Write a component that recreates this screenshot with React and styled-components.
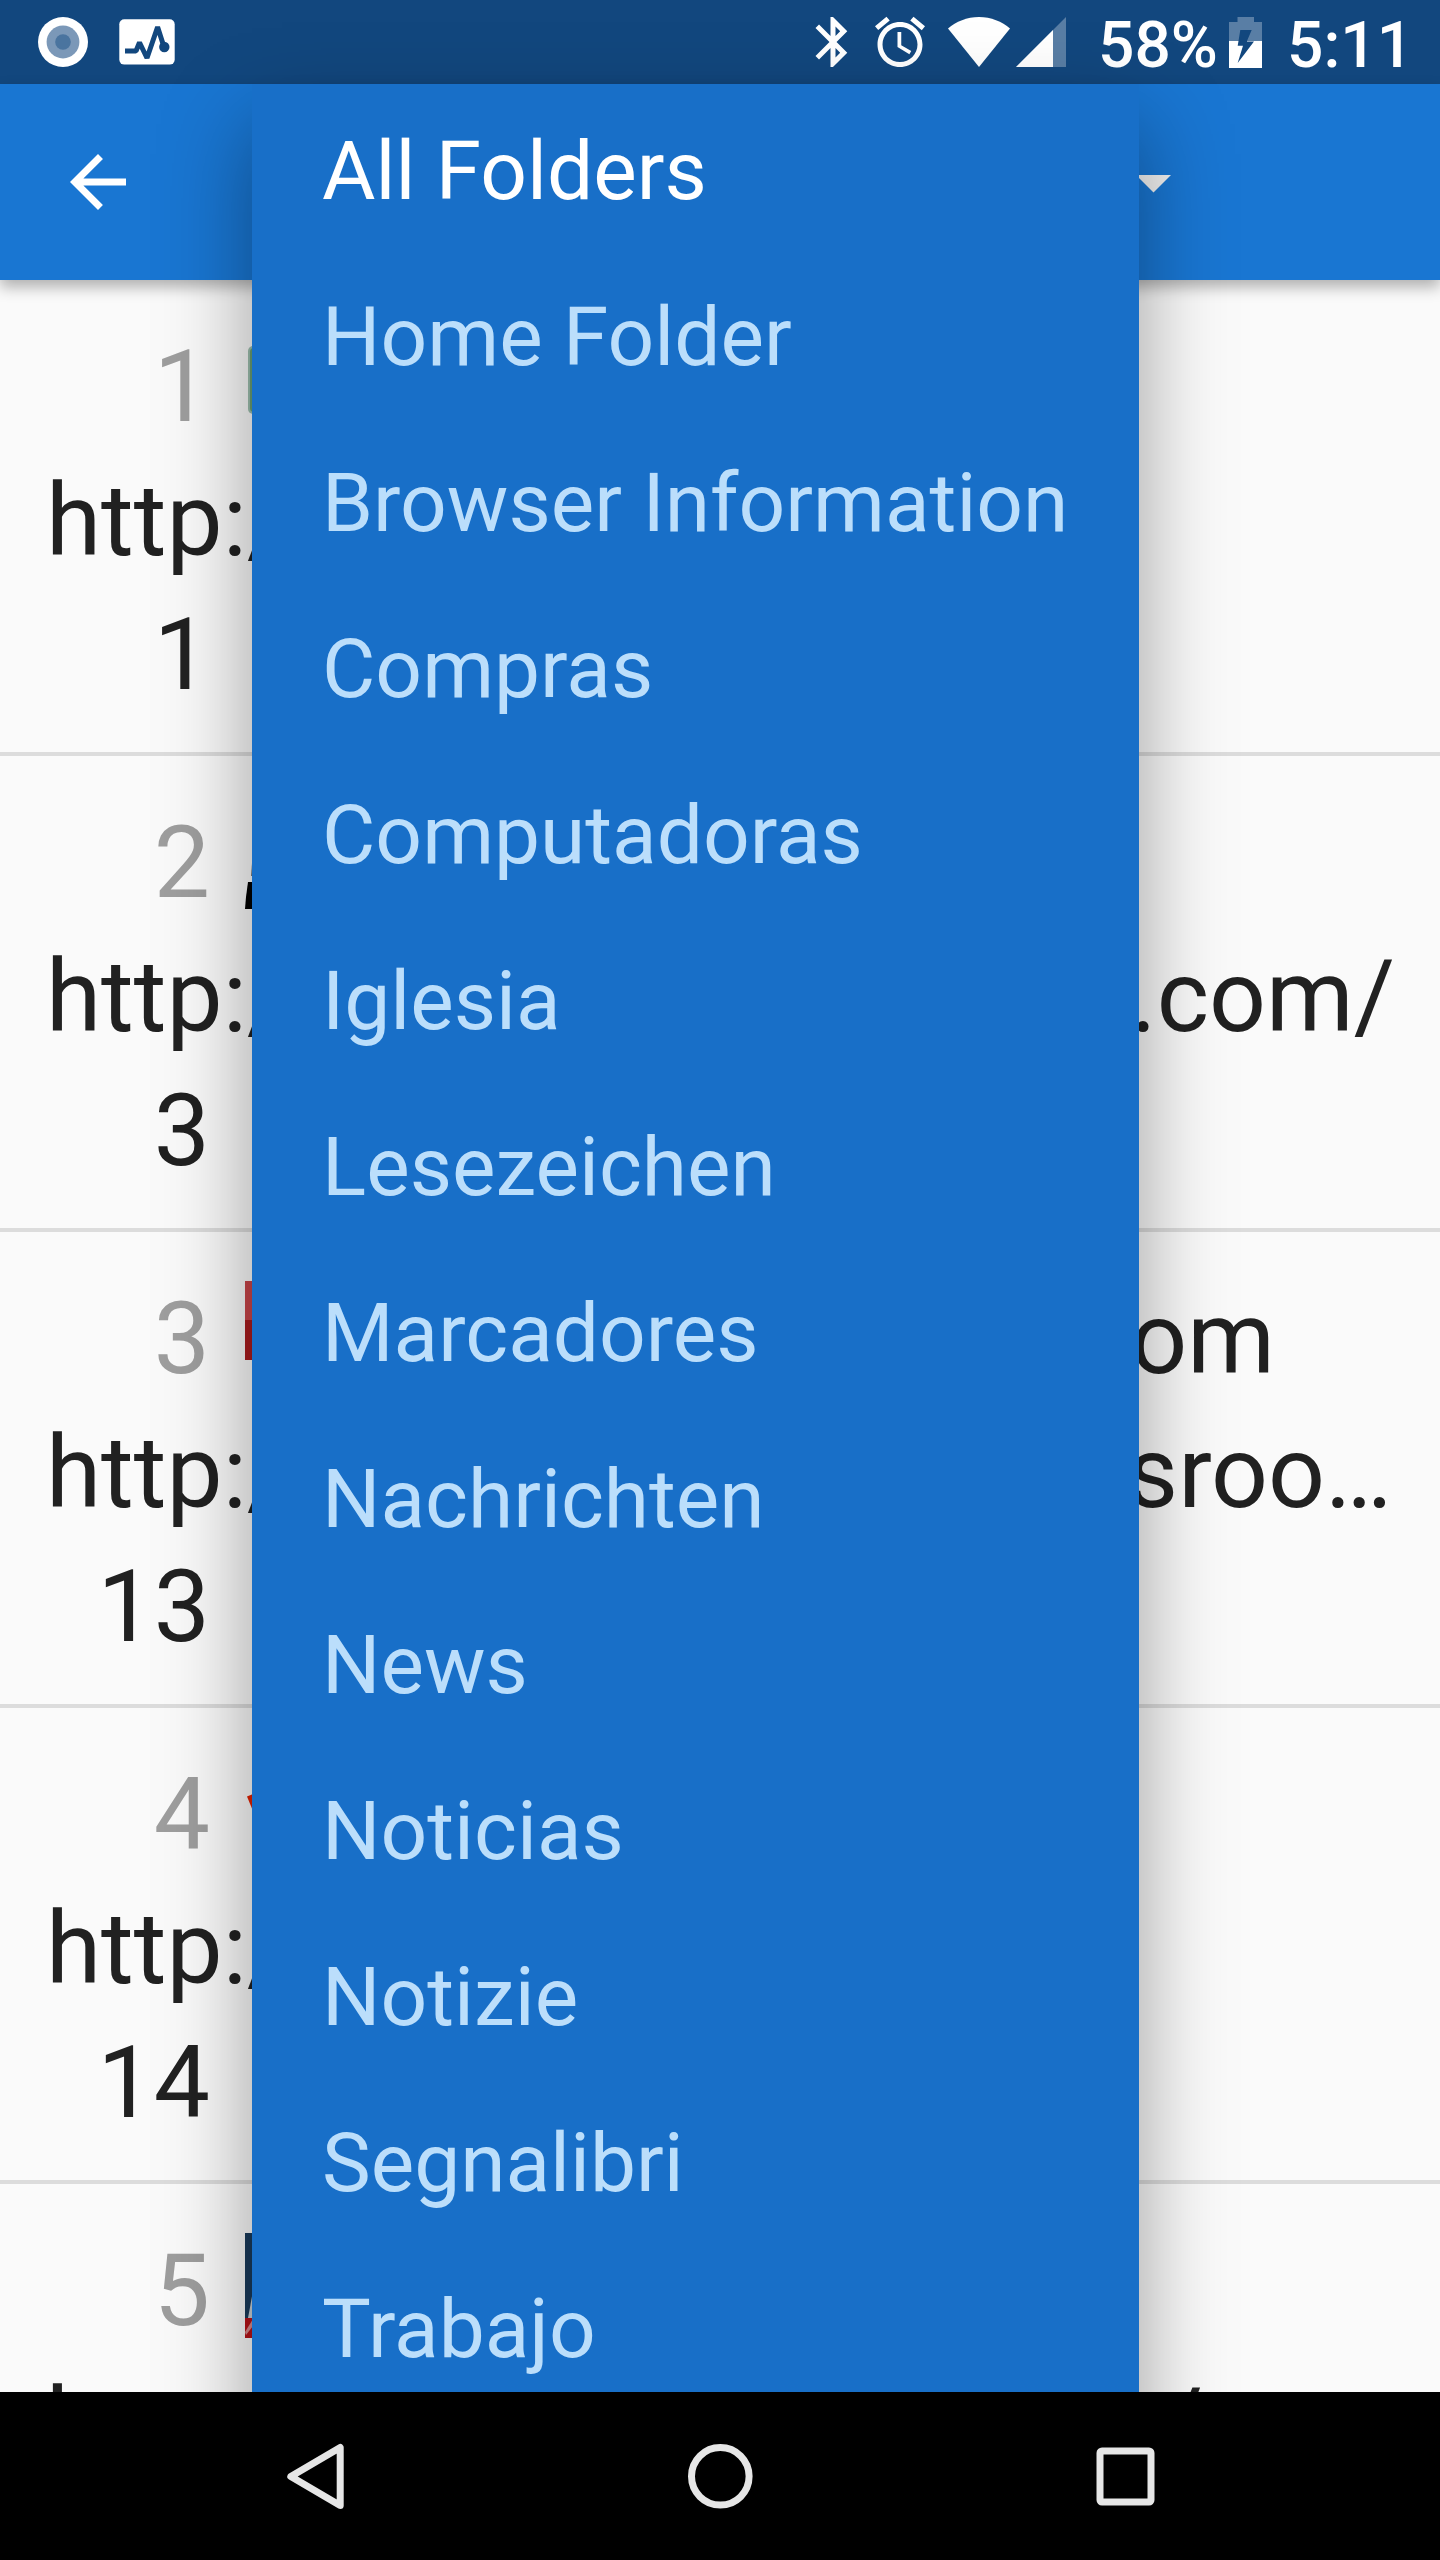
import React from "react";
import styled, { createGlobalStyle } from "styled-components";

const folders = [
  "All Folders",
  "Home Folder",
  "Browser Information",
  "Compras",
  "Computadoras",
  "Iglesia",
  "Lesezeichen",
  "Marcadores",
  "Nachrichten",
  "News",
  "Noticias",
  "Notizie",
  "Segnalibri",
  "Trabajo",
];

// the middle of every title and url sits under the open folder menu
const bookmarks = [
  { order: 1, id: 1, icon: "green" },
  { order: 2, id: 3, icon: "black", urlEnd: ".com/", urlGap: -1 },
  { order: 3, id: 13, icon: "flag", titleEnd: "om", titleGap: 119, urlEnd: "sroo…", urlGap: 2 },
  { order: 4, id: 14, icon: "check" },
  { order: 5, id: 15, icon: "navy", urlEnd: "/", urlGap: 191 },
];

function Favicon({ name }) {
  return (
    <FaviconSvg viewBox="0 0 105 105">
      {name === "green" && (
        <>
          <rect x="3" y="17" width="99" height="68" rx="5" fill="#9dbfae" />
          <rect x="5" y="19" width="95" height="64" rx="4" fill="#6a9f72" />
        </>
      )}
      {name === "black" && (
        <>
          <path d="M6 71L7 58H97V71z" fill="#777" />
          <path d="M0 104L1 92L3 77H102L105 104z" fill="#000" />
        </>
      )}
      {name === "flag" && (
        <>
          <rect width="105" height="39" fill="#c84549" />
          <rect y="39" width="105" height="40" fill="#a81b1e" />
        </>
      )}
      {name === "check" && <path d="M2 39.500L8 37L50 90L38 96L8 54z" fill="#e32100" />}
      {name === "navy" && (
        <>
          <rect width="105" height="105" fill="#193a5a" />
          <path d="M3 85L8 58V90z" fill="#c9d0d6" />
          <path d="M0 85H8V105H0z" fill="#b71218" />
          <path d="M0 99L8 86V93L1 102z" fill="#d88a8c" />
        </>
      )}
    </FaviconSvg>
  );
}

export default function App() {
  return (
    <>
      <GlobalStyle />
      <Screen>
        <StatusBar>
          <Notifications>
            <svg width="50" height="50" viewBox="0 0 50 50">
              <circle cx="25" cy="25" r="25" fill="#fff" />
              <circle cx="25" cy="25" r="16.4" fill="#7b98b8" />
              <circle cx="25" cy="25" r="7.8" fill="#4a749f" />
            </svg>
            <svg width="56" height="46" viewBox="0 0 56 46">
              <rect x="0.3" y="0.2" width="55.4" height="45.4" rx="5" fill="#fff" />
              <path
                d="M6 32H17L20.5 23.5L28 39L38.6 8L45 28"
                fill="none"
                stroke="#12477e"
                strokeWidth="5"
                strokeLinejoin="bevel"
              />
              <circle cx="45.3" cy="28" r="5.2" fill="#12477e" />
            </svg>
          </Notifications>
          <SystemIcons>
            <StatusIcon width="60" height="60" viewBox="0 0 24 24">
              <path d="M17.71 7.71L12 2h-1v7.59L6.41 5 5 6.41 10.59 12 5 17.59 6.41 19 11 14.41V22h1l5.71-5.71-4.3-4.29 4.3-4.29zM13 5.83l1.88 1.88L13 9.59V5.83zm1.88 10.46L13 18.17v-3.76l1.88 1.88z" />
            </StatusIcon>
            <StatusIcon width="60" height="60" viewBox="0 0 24 24" $left={7}>
              <path d="M22 5.72l-4.6-3.86-1.29 1.53 4.6 3.86L22 5.72zM7.88 3.39L6.6 1.86 2 5.71l1.29 1.53 4.59-3.85zM12.5 8H11v6l4.75 2.85.75-1.23-4-2.37V8zM12 4c-4.97 0-9 4.03-9 9s4.02 9 9 9c4.97 0 9-4.03 9-9s-4.03-9-9-9zm0 16c-3.87 0-7-3.13-7-7s3.13-7 7-7 7 3.13 7 7-3.13 7-7 7z" />
            </StatusIcon>
            <StatusIcon width="62" height="50" viewBox="0 0 62 50" $left={18}>
              <path d="M31 50L0 11.5C8 4.5 19 0 31 0S54 4.5 62 11.5z" />
            </StatusIcon>
            <StatusIcon width="50" height="50" viewBox="0 0 50 50" $left={6}>
              <path d="M50 0V50H0z" opacity="0.3" />
              <path d="M37 13V50H0z" />
            </StatusIcon>
            <StatusText $left={32} $width={131}>
              58%
            </StatusText>
            <StatusIcon width="33" height="51" viewBox="0 0 33 51">
              <path d="M8.5 0H25V5H33V24H18L22.7 13H11.3L9.5 24H0V5H8.5z" opacity="0.3" />
              <path d="M0 24H9.5L8.7 28.7H14L8.7 46L25 24.5H18V24H33V51H0z" />
            </StatusIcon>
            <StatusText $left={25} $width={116}>
              5:11
            </StatusText>
          </SystemIcons>
        </StatusBar>

        <Toolbar>
          <BackIcon viewBox="0 0 24 24">
            <path d="M20 11H7.83l5.59-5.59L12 4l-8 8 8 8 1.41-1.41L7.83 13H20v-2z" fill="#fff" />
          </BackIcon>
          <SpinnerArrow viewBox="0 0 35 18">
            <path d="M0 0H35L17.5 17.5z" fill="#f2f2f2" />
          </SpinnerArrow>
        </Toolbar>

        <List>
          {bookmarks.map((b) => (
            <Bookmark key={b.order}>
              <Line>
                <Number $muted>{b.order}</Number>
                <Favicon name={b.icon} />
                <Tail $gap={b.titleGap}>{b.titleEnd}</Tail>
              </Line>
              <Line>
                <span>http://</span>
                <Tail $gap={b.urlGap}>{b.urlEnd}</Tail>
              </Line>
              <Line>
                <Number>{b.id}</Number>
              </Line>
            </Bookmark>
          ))}
        </List>

        <MenuLayer>
          <Menu>
            {folders.map((name, i) => (
              <MenuItem key={name} $selected={i === 0}>
                {name}
              </MenuItem>
            ))}
          </Menu>
        </MenuLayer>

        <NavBar>
          <NavIcon viewBox="0 0 70 70">
            <path d="M10.8 35.5L60.2 6.5V64.5z" />
          </NavIcon>
          <NavIcon viewBox="0 0 70 70">
            <circle cx="35.3" cy="35.3" r="28.8" />
          </NavIcon>
          <NavIcon viewBox="0 0 70 70">
            <rect x="10" y="10" width="51" height="51" rx="2" />
          </NavIcon>
        </NavBar>
      </Screen>
    </>
  );
}

const GlobalStyle = createGlobalStyle`
  body {
    margin: 0;
    font-family: Roboto, sans-serif;
  }

  svg {
    display: block;
    flex-shrink: 0;
  }
`;

const Screen = styled.div`
  position: relative;
  display: flex;
  flex-direction: column;
  width: 1440px;
  height: 2560px;
  overflow: hidden;
  background: #fafafa;
`;

const StatusBar = styled.header`
  display: flex;
  justify-content: space-between;
  flex-shrink: 0;
  height: 84px;
  background: #12477e;
`;

const Notifications = styled.div`
  display: flex;
  align-items: center;
  gap: 31px;
  padding-left: 38px;
`;

const SystemIcons = styled.div`
  display: flex;
  align-items: center;
  padding-right: 37px;
`;

const StatusIcon = styled.svg`
  margin-left: ${(props) => props.$left || 0}px;
  fill: #fff;
`;

const StatusText = styled.span`
  width: ${(props) => props.$width}px;
  margin-left: ${(props) => props.$left}px;
  padding-top: 8px;
  color: #fff;
  font-size: 64px;
  font-weight: 500;
  line-height: 76px;
  white-space: nowrap;
`;

const Toolbar = styled.nav`
  position: relative;
  display: flex;
  align-items: center;
  justify-content: space-between;
  flex-shrink: 0;
  height: 196px;
  padding: 0 269px 0 56px;
  box-sizing: border-box;
  background: #1976d2;
  box-shadow: 0 7px 14px rgba(0, 0, 0, 0.3);
`;

const BackIcon = styled.svg`
  width: 84px;
  height: 84px;
`;

const SpinnerArrow = styled.svg`
  width: 35px;
  height: 18px;
  margin-top: 3px;
`;

const List = styled.main`
  flex: 1;
  min-height: 0;
  overflow: hidden;
`;

const Bookmark = styled.div`
  height: 402px;
  padding: 40px 46px 30px;
  border-bottom: 4px solid #dcdcdc;
`;

const Line = styled.div`
  display: flex;
  height: 134px;
  color: #212121;
  font-size: 100px;
  line-height: 134px;
  white-space: nowrap;
`;

const Number = styled.span`
  width: 164px;
  text-align: right;
  color: ${(props) => (props.$muted ? "#9e9e9e" : "#212121")};
`;

const FaviconSvg = styled.svg`
  width: 105px;
  height: 105px;
  margin: 9px 0 0 35px;
`;

const Tail = styled.span`
  margin-left: auto;
  margin-right: ${(props) => props.$gap || 0}px;
`;

// clips the menu and its shadow at the navigation bar
const MenuLayer = styled.div`
  position: absolute;
  inset: 0 0 168px;
  padding: 84px 301px 0 252px;
  overflow: hidden;
`;

const Menu = styled.ul`
  height: 2600px;
  margin: 0;
  padding: 4px 70px 0;
  box-sizing: border-box;
  list-style: none;
  background: #186fc8;
  box-shadow: 0 40px 84px rgba(0, 0, 0, 0.38);
`;

const MenuItem = styled.li`
  height: 166px;
  color: ${(props) => (props.$selected ? "#fff" : "#bbdefb")};
  font-size: 82px;
  line-height: 166px;
  white-space: nowrap;
`;

const NavBar = styled.footer`
  display: flex;
  align-items: center;
  justify-content: center;
  gap: 335px;
  flex-shrink: 0;
  height: 168px;
  background: #000;
`;

const NavIcon = styled.svg`
  width: 70px;
  height: 70px;
  fill: none;
  stroke: #e6e6e6;
  stroke-width: 7px;
  stroke-linejoin: round;
`;
